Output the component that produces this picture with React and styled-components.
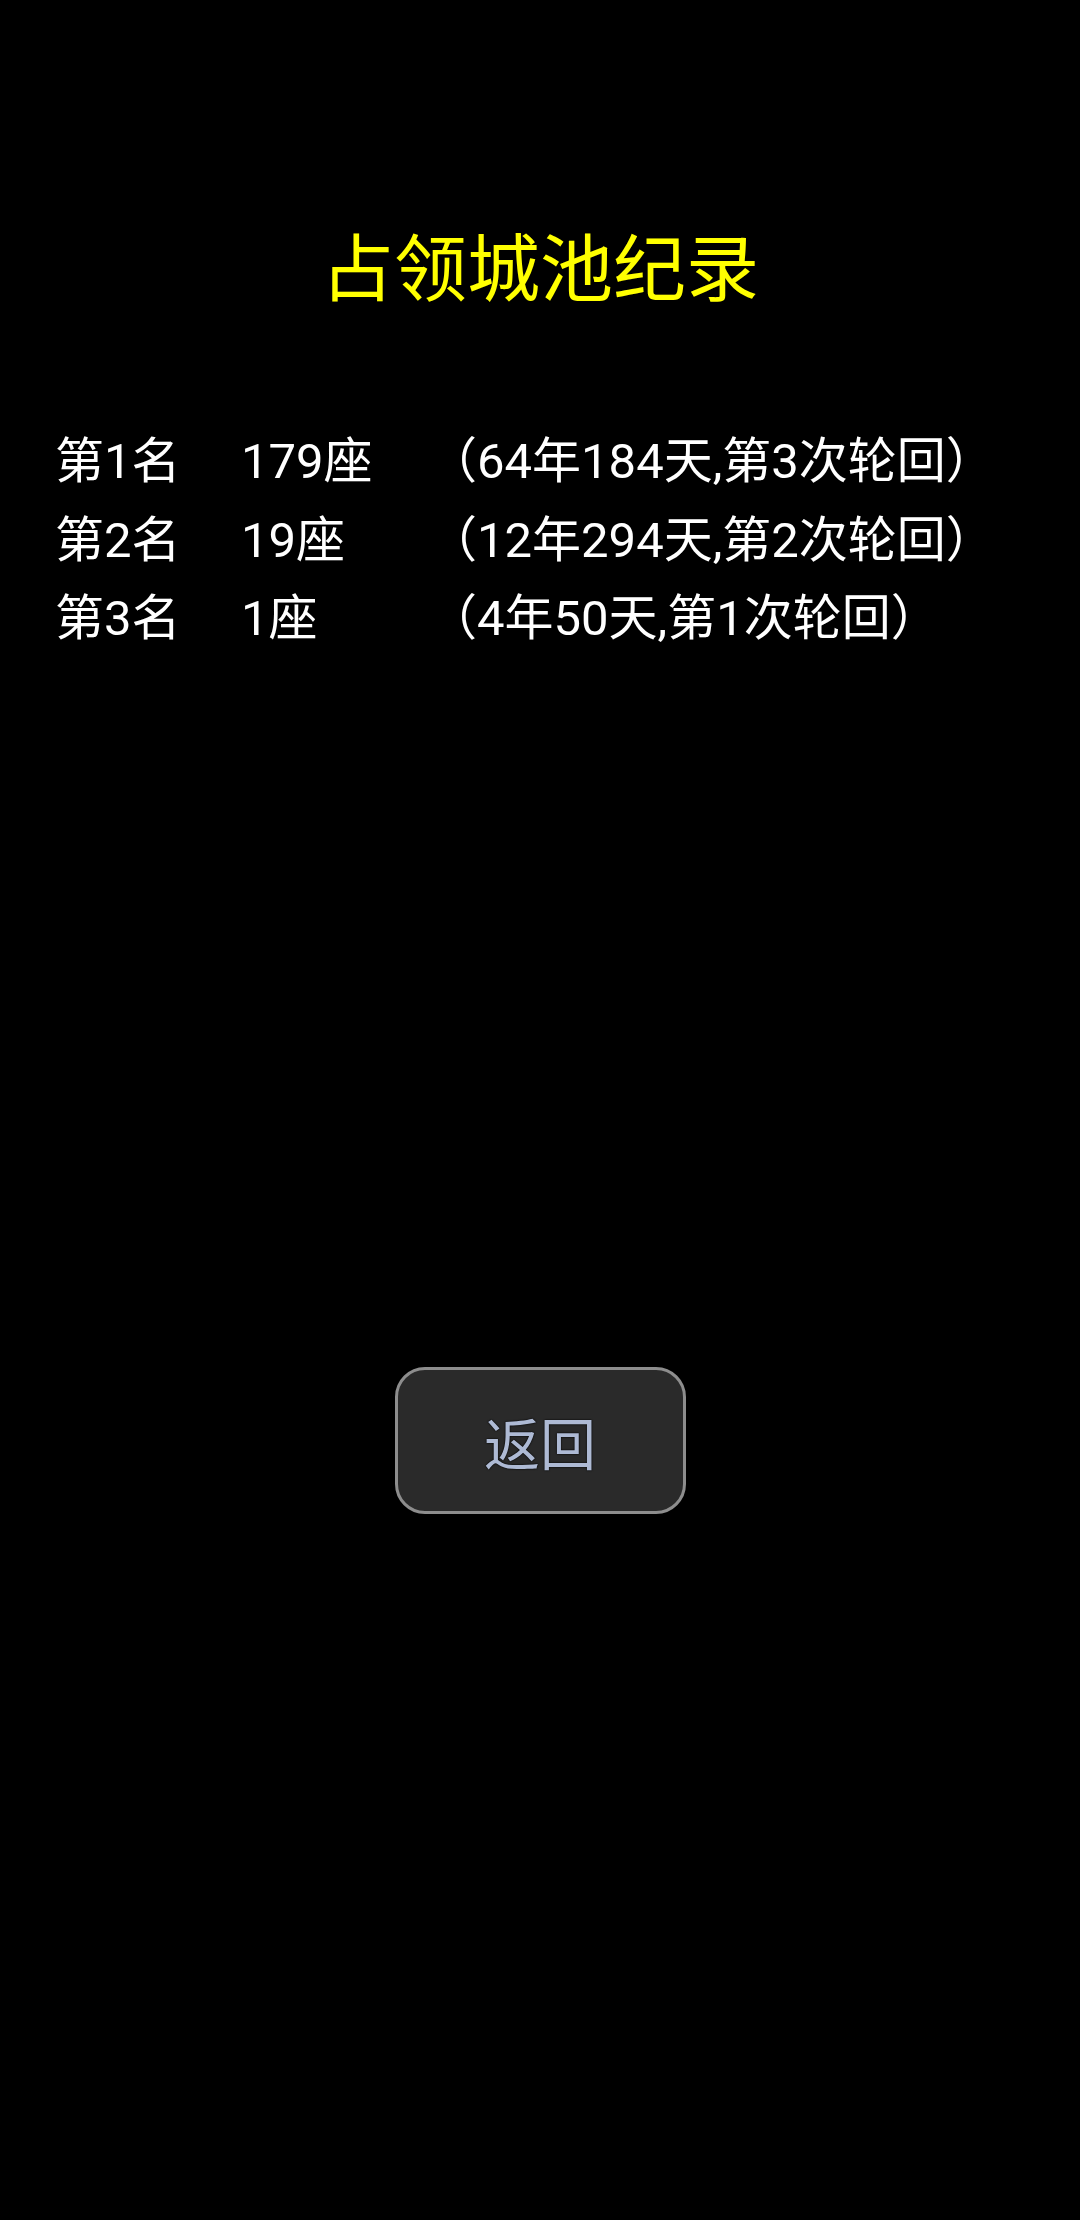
import React from "react";
import styled, { createGlobalStyle } from "styled-components";

const GlobalStyle = createGlobalStyle`
  html, body {
    margin: 0;
    padding: 0;
    background: #000;
  }
  body {
    font-family: Roboto, "Noto Sans CJK SC", sans-serif;
  }
`;

const Page = styled.div`
  min-height: 2220px;
  background: #000;
  display: flex;
  flex-direction: column;
`;

const Title = styled.h1`
  margin: 220px 0 0;
  height: 100px;
  line-height: 100px;
  text-align: center;
  font-size: 73px;
  font-weight: 400;
  color: #ffff00;
`;

const Records = styled.div`
  margin-top: 103px;
  padding-left: 55px;
  display: flex;
  flex-direction: column;
`;

const Row = styled.div`
  display: grid;
  grid-template-columns: 186px 187px auto;
  height: 78.5px;
  line-height: 78.5px;
  font-size: 49px;
  color: #fff;
  white-space: nowrap;
`;

const Footer = styled.div`
  margin-top: 708px;
  display: flex;
  justify-content: center;
`;

const BackButton = styled.button`
  width: 291px;
  height: 147px;
  border: 3px solid #8d8d8d;
  border-radius: 30px;
  background: #2a2a2a;
  color: #aebad4;
  font-family: "Noto Sans CJK SC", sans-serif;
  font-size: 56px;
  text-shadow: 0 0 2px #000, 0 0 1px #000;
  padding: 0;
  cursor: pointer;
`;

const records = [
  { rank: "第1名", count: "179座", detail: "（64年184天,第3次轮回）" },
  { rank: "第2名", count: "19座", detail: "（12年294天,第2次轮回）" },
  { rank: "第3名", count: "1座", detail: "（4年50天,第1次轮回）" },
];

export default function App() {
  return (
    <>
      <GlobalStyle />
      <Page>
        <Title>占领城池纪录</Title>
        <Records>
          {records.map((r) => (
            <Row key={r.rank}>
              <span>{r.rank}</span>
              <span>{r.count}</span>
              <span>{r.detail}</span>
            </Row>
          ))}
        </Records>
        <Footer>
          <BackButton>返回</BackButton>
        </Footer>
      </Page>
    </>
  );
}
